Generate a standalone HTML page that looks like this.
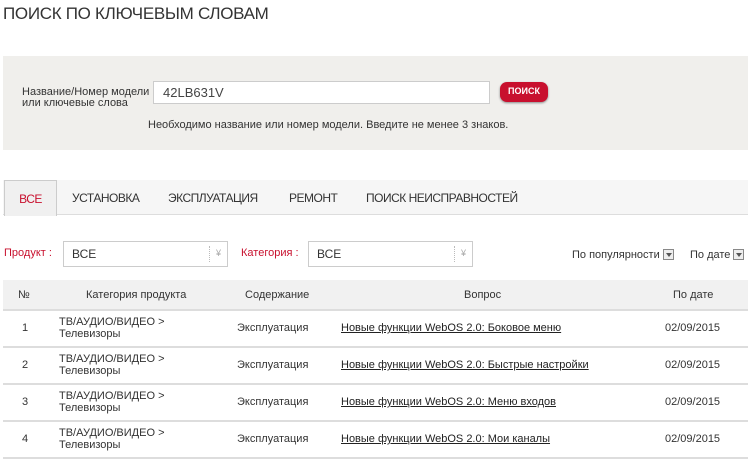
<!DOCTYPE html>
<html><head><meta charset="utf-8"><style>
*{margin:0;padding:0;box-sizing:border-box}
body{width:753px;height:458px;overflow:hidden;background:#fff;font-family:"Liberation Sans",Arial,sans-serif;color:#333;font-size:11px;position:relative}
.a{position:absolute}
h1{position:absolute;left:3px;top:4px;font-size:17px;font-weight:normal;color:#333;letter-spacing:-0.3px}
.box{left:3px;top:56px;width:745px;height:94px;background:#f0efec}
.inp{left:153px;top:81px;width:337px;height:23px;border:1px solid #ccc;background:#fff;font-size:13px;padding:3px 0 0 9px;color:#444}
.btn{left:500px;top:82px;width:48px;height:20px;background:#c8102e;border-radius:7px;color:#fff;font-weight:bold;font-size:9px;text-align:center;line-height:19px;box-shadow:0 1px 2px #888}
.tabs{left:3px;top:180px;width:745px;height:35px;background:#f6f6f6;border-bottom:1px solid #ddd}
.tab{position:absolute;top:0;height:35px;line-height:36px;font-size:12px;color:#333;letter-spacing:-0.5px}
.sel{border:1px solid #ccc;background:#fff;height:26px;font-size:12px;padding:5px 0 0 8px}
.sel i{position:absolute;right:0;top:4px;width:18px;height:16px;border-left:1px dotted #bbb;font-style:normal;color:#aaa;font-size:9px;text-align:center;line-height:14px}
.red{color:#c8102e;font-size:11px}
.th{left:3px;top:280px;width:745px;height:31px;background:#f1f1f1;border-bottom:2px solid #ddd}
.row{left:3px;width:745px;height:37px;border-bottom:2px solid #ddd}
.c{position:absolute;font-size:11px;color:#333}
u{color:#222}
.dd{display:inline-block;width:11px;height:11px;border:1px solid #888;vertical-align:-2px;margin-left:3px;position:relative;background:#eee}
.dd:after{content:"";position:absolute;left:2px;top:3px;border:3px solid transparent;border-top:4px solid #555}
</style></head><body>
<h1>ПОИСК ПО КЛЮЧЕВЫМ СЛОВАМ</h1>
<div class="a box"></div>
<div class="a" style="left:22px;top:87px;line-height:11px">Название/Номер модели<br>или ключевые слова</div>
<div class="a inp">42LB631V</div>
<div class="a btn">ПОИСК</div>
<div class="a" style="left:148px;top:119px">Необходимо название или номер модели. Введите не менее 3 знаков.</div>
<div class="a tabs">
<div class="tab" style="left:1px;width:53px;background:#f0f0f0;border:1px solid #ccc;border-bottom:none;height:36px;text-align:center;color:#c8102e">ВСЕ</div>
<div class="tab" style="left:69px">УСТАНОВКА</div>
<div class="tab" style="left:165px">ЭКСПЛУАТАЦИЯ</div>
<div class="tab" style="left:286px">РЕМОНТ</div>
<div class="tab" style="left:363px">ПОИСК НЕИСПРАВНОСТЕЙ</div>
</div>
<div class="a red" style="left:4px;top:247px">Продукт :</div>
<div class="a sel" style="left:63px;top:241px;width:165px">ВСЕ<i>¥</i></div>
<div class="a red" style="left:241px;top:247px">Категория :</div>
<div class="a sel" style="left:308px;top:241px;width:165px">ВСЕ<i>¥</i></div>
<div class="a" style="left:572px;top:249px">По популярности<span class="dd"></span></div>
<div class="a" style="left:690px;top:249px">По дате<span class="dd"></span></div>
<div class="a th">
<span class="c" style="left:15px;top:9px">№</span>
<span class="c" style="left:83px;top:9px">Категория продукта</span>
<span class="c" style="left:242px;top:9px">Содержание</span>
<span class="c" style="left:461px;top:9px">Вопрос</span>
<span class="c" style="left:670px;top:9px">По дате</span>
</div>
<div class="a row" style="top:311px"><span class="c" style="left:19px;top:11px">1</span><span class="c" style="left:56px;top:5px;line-height:12px">ТВ/АУДИО/ВИДЕО &gt;<br>Телевизоры</span><span class="c" style="left:234px;top:11px">Эксплуатация</span><span class="c" style="left:338px;top:11px"><u>Новые функции WebOS 2.0: Боковое меню</u></span><span class="c" style="left:662px;top:11px">02/09/2015</span></div>
<div class="a row" style="top:348px"><span class="c" style="left:19px;top:11px">2</span><span class="c" style="left:56px;top:5px;line-height:12px">ТВ/АУДИО/ВИДЕО &gt;<br>Телевизоры</span><span class="c" style="left:234px;top:11px">Эксплуатация</span><span class="c" style="left:338px;top:11px"><u>Новые функции WebOS 2.0: Быстрые настройки</u></span><span class="c" style="left:662px;top:11px">02/09/2015</span></div>
<div class="a row" style="top:385px"><span class="c" style="left:19px;top:11px">3</span><span class="c" style="left:56px;top:5px;line-height:12px">ТВ/АУДИО/ВИДЕО &gt;<br>Телевизоры</span><span class="c" style="left:234px;top:11px">Эксплуатация</span><span class="c" style="left:338px;top:11px"><u>Новые функции WebOS 2.0: Меню входов</u></span><span class="c" style="left:662px;top:11px">02/09/2015</span></div>
<div class="a row" style="top:422px"><span class="c" style="left:19px;top:11px">4</span><span class="c" style="left:56px;top:5px;line-height:12px">ТВ/АУДИО/ВИДЕО &gt;<br>Телевизоры</span><span class="c" style="left:234px;top:11px">Эксплуатация</span><span class="c" style="left:338px;top:11px"><u>Новые функции WebOS 2.0: Мои каналы</u></span><span class="c" style="left:662px;top:11px">02/09/2015</span></div>
</body></html>
